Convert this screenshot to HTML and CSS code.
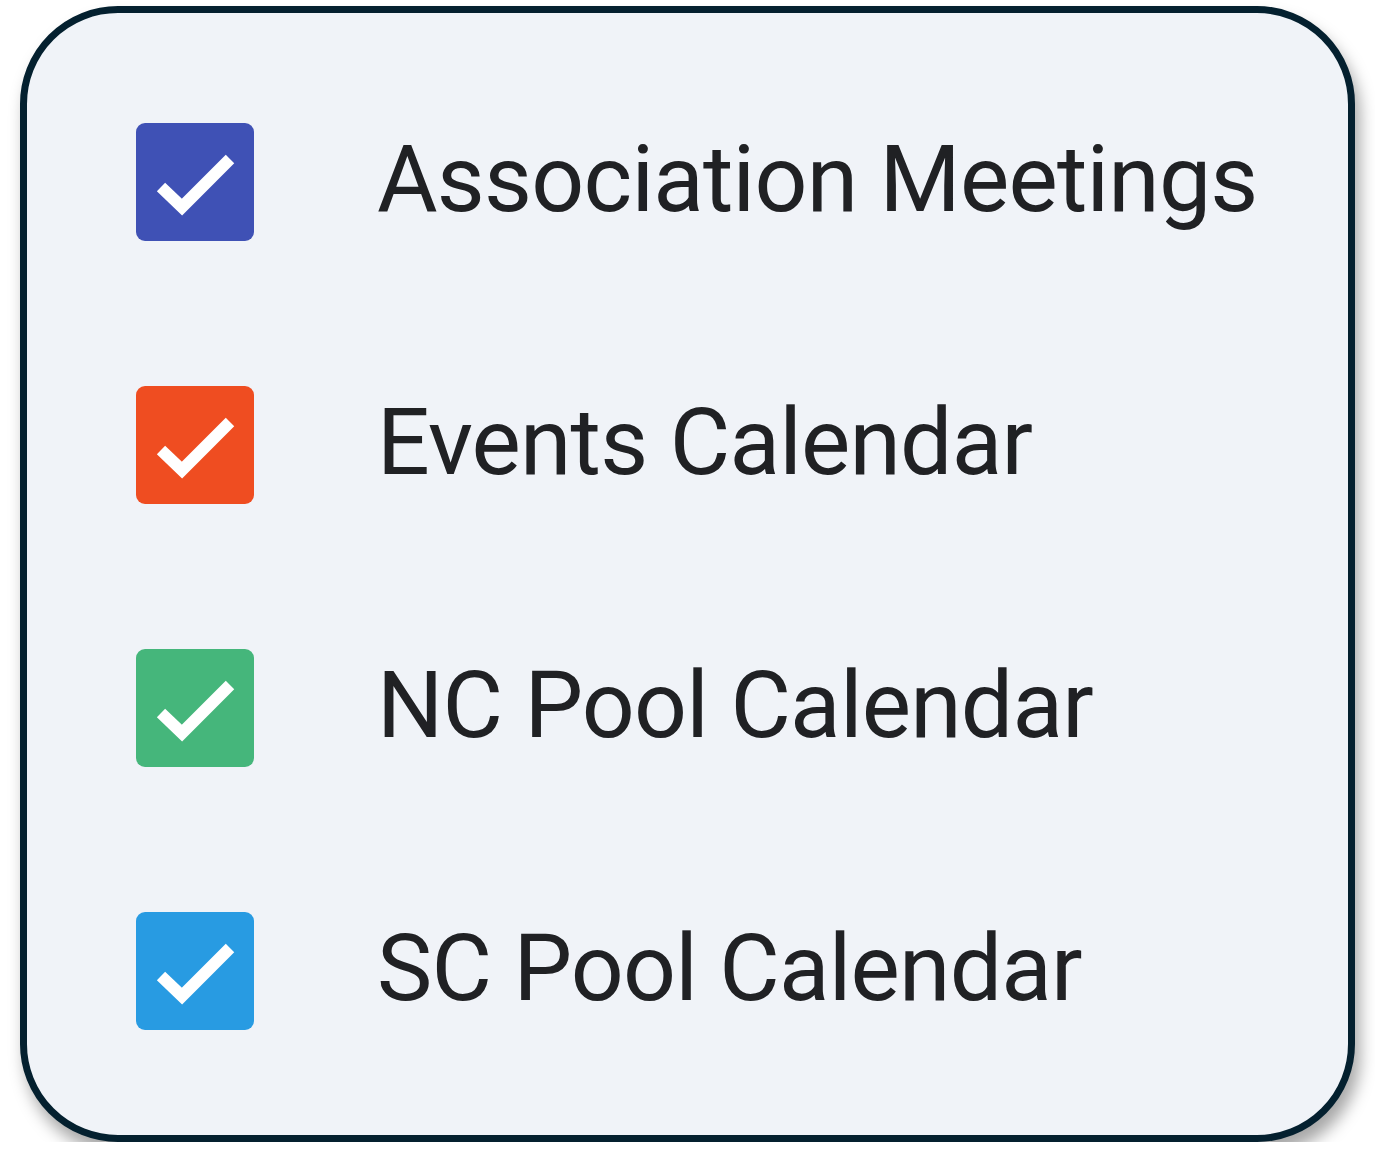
FILE: index.html
```html
<!DOCTYPE html>
<html lang="en">
<head>
<meta charset="utf-8">
<title>Calendars</title>
<link rel="stylesheet" href="styles.css">
</head>
<body>
<div class="card">
  <ul class="list">
    <li class="item">
      <span class="box box-blueberry">
        <svg viewBox="0 0 118 118" width="118" height="118"><polyline points="25,64 46,84 94,36" /></svg>
      </span>
      <span class="label">Association Meetings</span>
    </li>
    <li class="item">
      <span class="box box-tangerine">
        <svg viewBox="0 0 118 118" width="118" height="118"><polyline points="25,64 46,84 94,36" /></svg>
      </span>
      <span class="label">Events Calendar</span>
    </li>
    <li class="item">
      <span class="box box-sage">
        <svg viewBox="0 0 118 118" width="118" height="118"><polyline points="25,64 46,84 94,36" /></svg>
      </span>
      <span class="label">NC Pool Calendar</span>
    </li>
    <li class="item">
      <span class="box box-peacock">
        <svg viewBox="0 0 118 118" width="118" height="118"><polyline points="25,64 46,84 94,36" /></svg>
      </span>
      <span class="label">SC Pool Calendar</span>
    </li>
  </ul>
</div>
</body>
</html>
```
FILE: styles.css
```css
html, body {
  margin: 0;
  padding: 0;
  background: #ffffff;
}

body {
  font-family: Roboto, "Liberation Sans", sans-serif;
  padding: 6px 0 0 20px;
}

.card {
  box-sizing: border-box;
  width: 1335px;
  height: 1136px;
  background: #f0f3f8;
  border: 7px solid #04202f;
  border-radius: 98px;
  box-shadow: 5px 12px 16px rgba(0, 0, 0, 0.35);
  padding: 110px 0 0 109px;
}

.list {
  list-style: none;
  margin: 0;
  padding: 0;
  display: flex;
  flex-direction: column;
  gap: 145px;
}

.item {
  display: flex;
  align-items: center;
  height: 118px;
}

.box {
  flex: none;
  width: 118px;
  height: 118px;
  border-radius: 9px;
  display: block;
}

.box svg {
  display: block;
}

.box polyline {
  fill: none;
  stroke: #ffffff;
  stroke-width: 12;
  stroke-linecap: butt;
  stroke-linejoin: miter;
}

.box-blueberry { background: #3f51b5; }
.box-tangerine { background: #ef4d21; }
.box-sage { background: #45b67b; }
.box-peacock { background: #289be2; }

.label {
  margin-left: 123px;
  font-size: 93px;
  letter-spacing: -0.8px;
  line-height: 1;
  color: #202124;
  white-space: nowrap;
  position: relative;
  top: -3px;
}
```
